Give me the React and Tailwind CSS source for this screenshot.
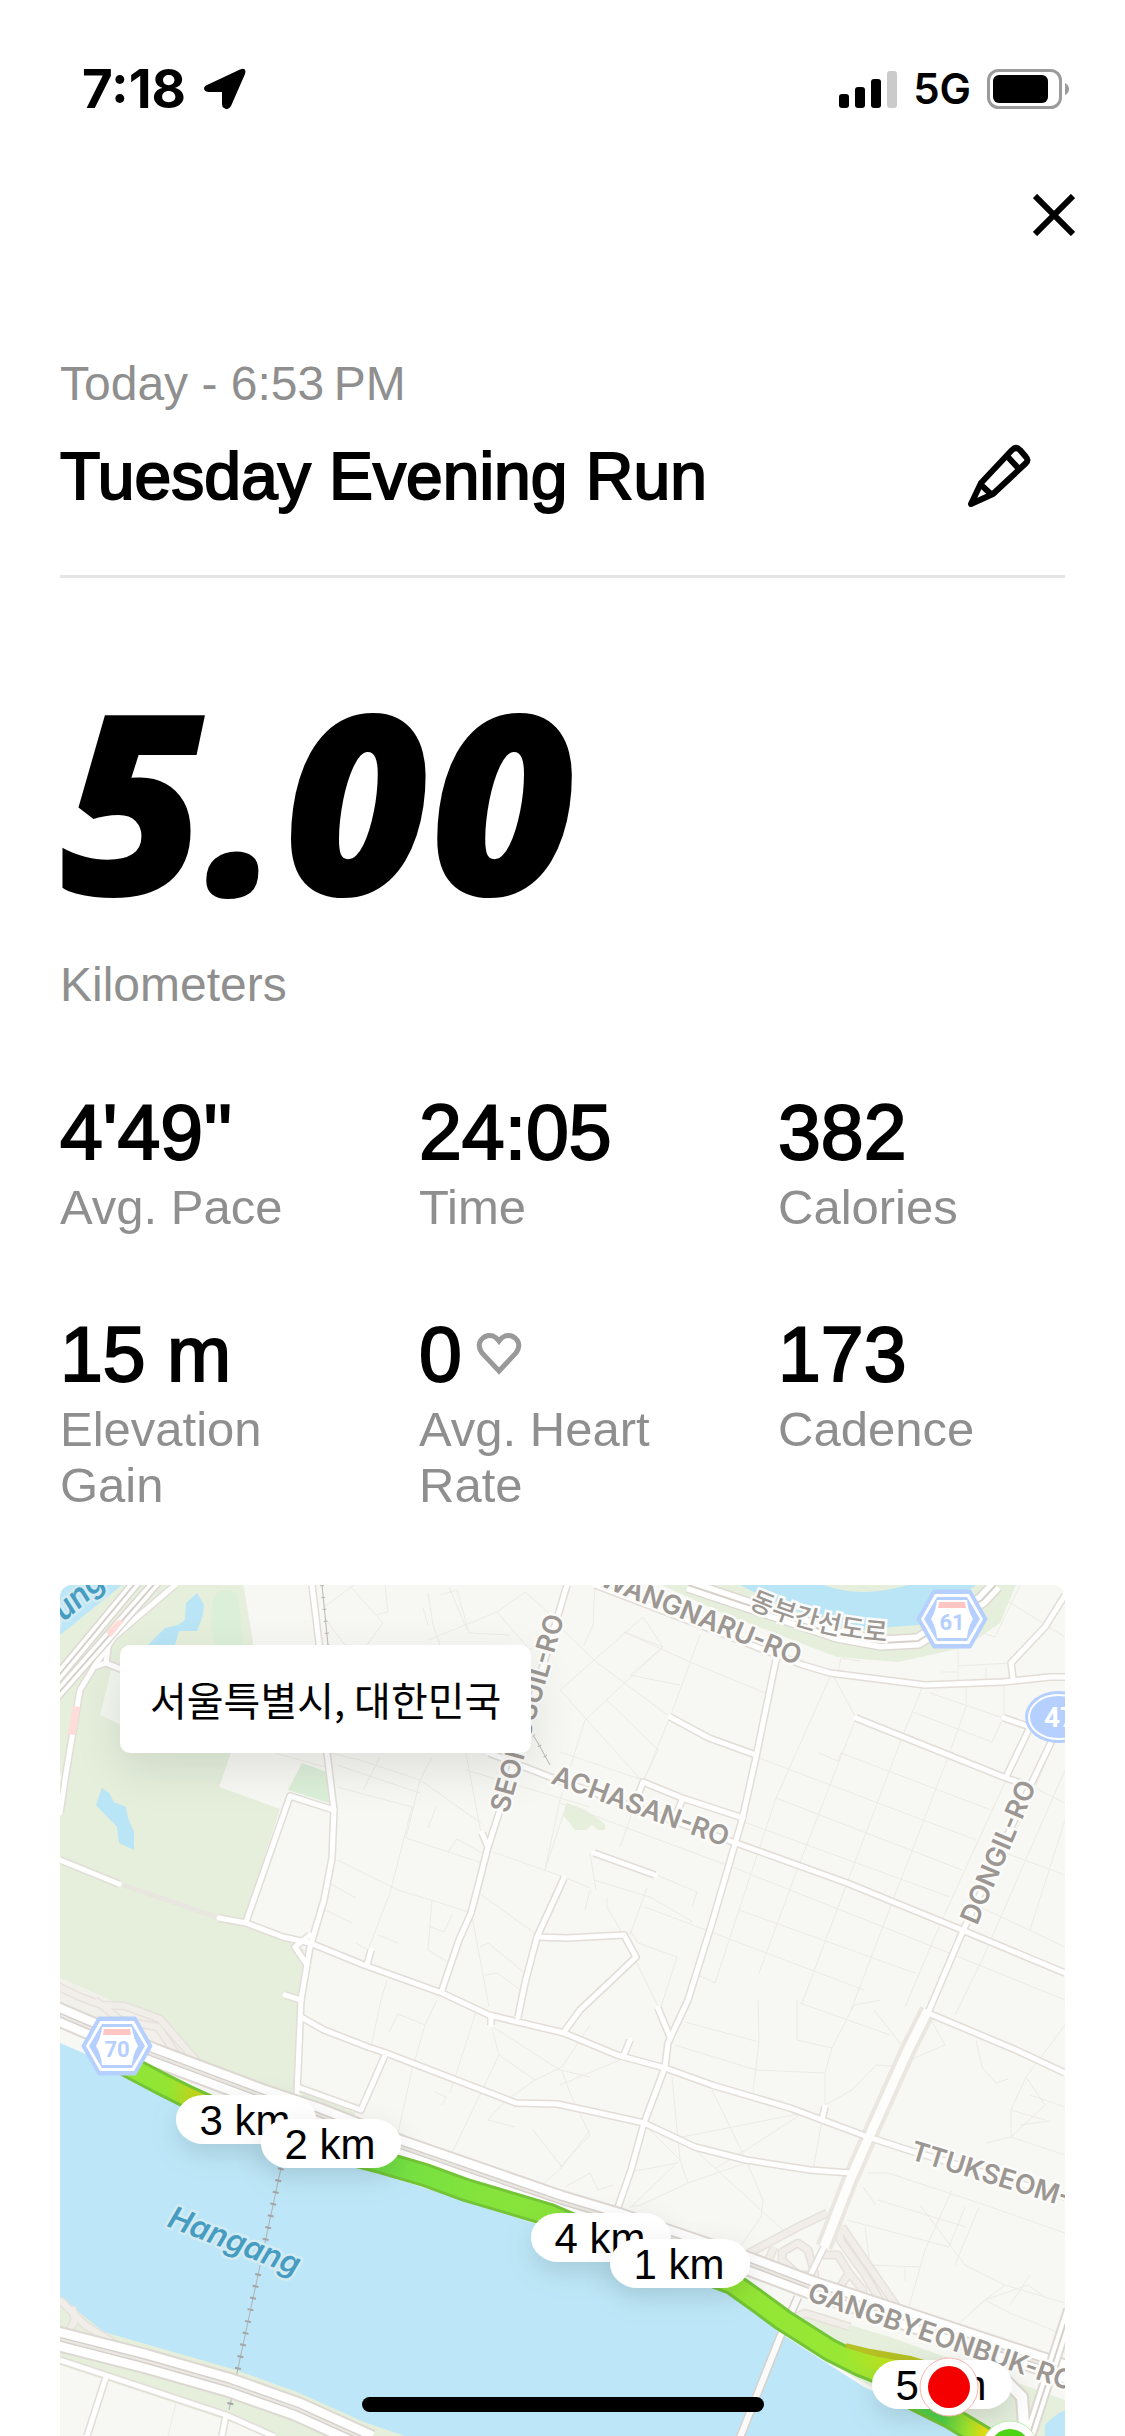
import React from 'react';

const STATS = [
  { label: 'Avg. Pace', value: "4'49''" },
  { label: 'Time', value: '24:05' },
  { label: 'Calories', value: '382' },
  { label: 'Elevation Gain', value: '15 m' },
  { label: 'Avg. Heart Rate', value: '0', heart: true },
  { label: 'Cadence', value: '173' },
];

// Small residential streets, drawn as hairlines
const STREETS = [
  'M640 50L630 78L610 132L583 197L560 262',
  'M564 47L630 77L710 110',
  'M583 32L603 62L525 135L500 215L485 285',
  'M583 32L540 70L500 105L583 197',
  'M564 47L603 62',
  'M500 42L535 76L610 132',
  'M535 0L533 40L524 60',
  'M547 115L598 165L583 197',
  'M603 62L570 90L609 98L620 100',
  'M770 92L716 213L679 325L655 398L638 390',
  'M774 92L796 133L737 285L699 388',
  'M841 155L787 298L742 418',
  'M887 175L833 315L791 425',
  'M946 195L882 335L845 422',
  'M781 168L931 225',
  'M759 168L778 176L781 168',
  'M699 173L916 255',
  'M716 213L902 285',
  'M684 237L890 312',
  'M672 282L899 372L1005 415',
  'M679 325L855 388',
  'M585 322L804 405',
  'M500 167L583 195',
  'M500 218L672 282',
  'M1005 185L922 375L895 430',
  'M1005 235L970 345',
  'M1005 130L970 215L930 300',
  'M973 202L1005 218',
  'M929 262L1005 290',
  'M916 320L1005 362',
  'M882 87L898 87M898 63V95M898 81L950 78M926 82V96',
  'M777 92L781 73L800 76',
  'M946 15L1005 52M960 0L935 52L920 47',
  'M862 103L841 155',
  'M870 108L943 133L932 157L853 127',
  'M906 100V122L887 175M944 97V133',
  'M534 295L590 312L633 337M587 303L580 322L570 350',
  'M592 288L637 307L632 322',
  'M530 268L536 305M525 325L530 305M547 312V322L562 348',
  'M562 348L600 425M570 345L578 358L617 372L600 425',
  'M291 2L316 30L328 27L325 0M316 30L323 38L296 75',
  'M264 22L294 0M264 32L296 75',
  'M368 8L373 40L380 60M389 2L407 45M363 23L368 40',
  'M368 55L405 40L437 27L465 7M380 10L397 5L409 48',
  'M437 27L470 65L505 40M465 7L505 42M409 48L450 50',
  'M183 0L193 60',
  'M277 275L338 305L409 327',
  'M352 222L330 308L308 365L296 358M318 350L338 358',
  'M277 202L352 222M303 205L320 172M277 180L360 208',
  'M270 168L300 175L360 195L421 238',
  'M406 168L421 248M215 168L265 182',
  'M372 172L360 195L346 253L422 278M376 222L368 243M388 267L397 254L422 268',
  'M433 267L504 292L530 303',
  'M419 308L477 350',
  'M412 332L429 422M425 390L437 388L463 407M420 362L428 358L465 388',
  'M507 218L485 285',
  'M372 315L368 365L389 378M368 341L384 347L392 330',
  'M267 297L296 313M265 325L292 338',
  'M406 185L530 222',
  'M327 395L321 415L311 462',
  'M377 415L365 440L352 485L338 548M365 440L338 429L329 447',
  'M416 427L390 508',
  'M431 440L439 470L392 568M433 442L500 485L530 492',
  'M439 470L475 495L502 482L530 440',
  'M475 495L444 517L428 535L455 542',
  'M375 507L386 512L382 520',
  'M473 545L502 582L480 602M502 582L530 545',
  'M625 437L699 457L693 507',
  'M615 460L696 485L765 488M698 415L699 457',
  'M737 415V455L772 463M740 418L830 450',
  'M814 425L843 462',
  'M868 430L885 460L852 474L830 481',
  'M821 415L794 420L772 463L765 488V522M830 481L816 480L792 505L765 520',
  'M612 492L620 575L571 622',
  'M652 505L686 575L703 615L701 632L680 662',
  'M743 528L622 552M500 500L560 475',
  'M762 535L753 585',
  'M686 578L628 598L581 620L569 622',
  'M635 565L723 645M575 586L617 578M656 583L686 565L743 528',
  'M628 598L620 575L590 545M500 582L530 550L510 508L502 486',
  'M505 602L530 588L538 605L553 600',
  'M808 588L828 588L919 618L1005 648',
  'M818 615L906 642M803 602L816 620',
  'M787 635L889 662L905 622',
  'M892 605L865 665L848 725',
  'M919 622L895 680M805 642L810 680L860 682M845 682V696',
  'M916 455L922 482L936 498L948 494',
  'M966 492L951 525V552L1005 570M951 525L985 535',
  'M926 558L951 552L985 520L966 492L1005 440',
  'M970 510L1005 522M960 540L990 536',
  'M895 742L925 715L950 728L1005 750M925 715L968 700L985 712M950 720L970 690',
  'M860 620L905 680L945 700L1005 718M945 700L925 715',
  'M108 851L116 817',
];

const ROADS = [
  'M252 0L259 58L267 168L274 225L272 273L264 315L250 362L241 415L237 508',
  'M274 225L230 211L186 337',
  'M0 275L59 299',
  'M159 333L186 338L223 352L250 358L304 380L382 408L429 430L504 448L557 470L605 483L652 500L730 523L808 552L848 565L1005 612',
  'M115 0L54 52L34 82L20 105L7 182L0 228',
  'M49 55L46 78L80 92M46 78L34 82',
  'M507 0L439 228L428 262L417 305L411 328L399 355L382 405M422 248L428 262',
  'M429 168L490 192L676 258L787 298L902 345L1005 388',
  'M534 268L595 290',
  'M716 75L696 172L682 235L652 338L628 415L608 458L605 482L584 538L571 585L556 628',
  'M598 423L610 452',
  'M535 0L640 40L743 80L770 88L865 100L943 97L990 92L1005 92',
  'M953 93L951 78L985 42L1005 10',
  'M610 132L649 153L696 170',
  'M579 208L583 197L622 213L683 233M622 215L617 228',
  'M796 133L946 193L973 202',
  'M944 133L970 142L946 192',
  'M1005 128L973 195L902 348L868 428',
  'M764 662L748 695',
  'M504 293L477 352L465 398L458 432',
  'M477 352L507 353L564 350L576 372L554 393L520 425L504 447',
  'M311 365L307 380M225 410L241 415M570 455L563 472M250 350L235 362L247 380',
  'M241 432L264 445L308 462L326 468L456 518L497 519L530 526L584 538L635 562L686 575L750 585L791 588',
  'M326 468L301 525L240 503',
  'M868 428L956 465L1005 488',
  'M431 430V440M765 522L762 535',
  'M0 775L166 830L213 851M46 792L27 851M166 830L162 851',
];

const PINS = [
  { label: '3 km', x: 116, y: 510 },
  { label: '2 km', x: 201, y: 534 },
  { label: '4 km', x: 471, y: 628 },
  { label: '1 km', x: 550, y: 654 },
  { label: '5 km', x: 812, y: 775 },
];

const NORTH_HIGHWAY = 'M-5 428L91 469L203 511L257 529L341 562L500 617L557 634L689 679L750 702L1010 788';
const SOUTH_HIGHWAY = 'M-5 753L85 776L169 800L237 824L310 857';
const RIVERSIDE = 'M628 0L703 25L777 50L821 58L858 56L922 15L936 0';
const DONGIL = 'M868 425L848 465L809 552L790 595L764 662';
const RAMPS = [
  'M767 628L738 642L689 668M703 688L714 662M780 640V655L805 690L830 732M782 642L848 738',
  'M722 667L738 658L748 665L755 690L738 690L722 675Z',
  'M762 670H778L789 688L780 702H755M789 688L803 705V720',
  'M-5 400L20 412L42 420L65 421L100 434L112 448L140 480M35 415L60 435L98 442L118 472',
  'M0 715L25 740L60 762M12 722L15 735L8 748',
  'M720 740L745 728L790 742',
];
const ROUTE = 'M66 480L100 498L128 512L203 546L262 562L324 578L365 590L406 605L490 630L560 660L640 686L672 698L700 718L723 735L770 765L800 780L825 790L850 812L890 832L925 853';

const StatusBar = () => (
  <div className="flex items-center justify-between pt-[49px] pl-[82px] pr-[54px]">
    <div className="flex h-20 items-center gap-[18px]">
      <span className="font-['Inter',sans-serif] text-[53px] leading-[60px] font-bold">7:18</span>
      <svg viewBox="0 0 42 42" className="h-[42px] w-[42px]" aria-hidden="true">
        <path
          d="M3 17L36 1.500Q43 -1 41 6L27 38Q24 43 20 40Q18 39 18 36V24H5Q1 24 0 21Q0 18 3 17Z"
          fill="black"
        />
      </svg>
    </div>
    <div className="flex h-20 items-center gap-4">
      <svg viewBox="0 0 58 38" className="h-[38px] w-[58px]" aria-hidden="true">
        <rect x="0" y="24" width="10" height="14" rx="3" />
        <rect x="16" y="17" width="10" height="21" rx="3" />
        <rect x="32" y="9" width="10" height="29" rx="3" />
        <rect x="48" y="1" width="10" height="37" rx="3" fill="#cbcbcb" />
      </svg>
      <span className="font-['Inter',sans-serif] text-[42px] leading-[60px] font-semibold">5G</span>
      <svg viewBox="0 0 84 40" className="h-10 w-[84px]" aria-hidden="true">
        <rect x="1.500" y="1.500" width="72" height="37" rx="10" fill="none" stroke="#9b9b9b" strokeWidth="3" />
        <rect x="6" y="6" width="55" height="28" rx="6" />
        <path d="M78 14Q82 16 82 20Q82 24 78 26Z" fill="#9b9b9b" />
      </svg>
    </div>
  </div>
);

const PencilIcon = () => (
  <svg
    viewBox="28 24 66 66"
    className="h-[66px] w-[66px]"
    fill="none"
    stroke="black"
    strokeWidth="6"
    strokeLinejoin="round"
    aria-hidden="true"
  >
    <path d="M32 85L42 64L73 31Q77 27 81 31L87 38Q90 41 87 44L54 75Z" />
    <path d="M68 37L80 50M41 65L53 76" />
  </svg>
);

const HeartIcon = () => (
  <svg viewBox="0 0 46 44" className="h-11 w-[46px]" fill="none" stroke="#999999" strokeWidth="5" aria-hidden="true">
    <path d="M23 39L6 21Q1 14 5 8Q10 2 17 4Q20 5 23 9Q26 5 29 4Q36 2 41 8Q45 14 40 21Z" />
  </svg>
);

const HexShield = ({ x, y, number }) => (
  <g transform={`translate(${x} ${y})`}>
    <path d="M-18 -28H18L34 0L18 28H-18L-34 0Z" fill="#b5d0ff" stroke="#b5d0ff" strokeWidth="3" strokeLinejoin="round" />
    <path d="M-17 -25H17L31 0L17 25H-17L-31 0Z" fill="white" />
    <path d="M-15 -22H15L28 0L15 22H-15L-28 0Z" fill="#b5d0ff" />
    <path d="M-15 -19H15Q16 -8 21 0Q16 8 15 19H-15Q-16 8 -21 0Q-16 -8 -15 -19Z" fill="white" />
    <path d="M-13 -17H13L14 -11H-14Z" fill="#ffc5c3" />
    <text y="11" textAnchor="middle" fill="#b5d0ff" className="font-['Roboto',sans-serif] text-[22px] font-bold">
      {number}
    </text>
  </g>
);

const RoadLabel = ({ x, y, angle, children }) => (
  <text
    transform={`translate(${x} ${y}) rotate(${angle})`}
    fill="#9c9793"
    stroke="#fbfbf9"
    strokeWidth="5"
    strokeLinejoin="round"
    paintOrder="stroke"
    className="font-['Inter',sans-serif] text-[27px] font-semibold"
  >
    {children}
  </text>
);

const RouteMap = () => (
  <svg viewBox="0 0 1005 851" className="block w-full" role="img" aria-label="Route map">
    <defs>
      <filter id="pinShadow" x="-30%" y="-60%" width="160%" height="260%">
        <feDropShadow dx="0" dy="10" stdDeviation="14" floodOpacity="0.12" />
      </filter>
      <linearGradient id="routeColor" gradientUnits="userSpaceOnUse" x1="66" y1="0" x2="925" y2="0">
        <stop offset="0" stopColor="#8fe637" />
        <stop offset="0.05" stopColor="#93e532" />
        <stop offset="0.08" stopColor="#c4d61a" />
        <stop offset="0.14" stopColor="#8fe637" />
        <stop offset="0.29" stopColor="#6fe045" />
        <stop offset="0.42" stopColor="#85e33b" />
        <stop offset="0.83" stopColor="#98e734" />
        <stop offset="0.87" stopColor="#a8e52c" />
        <stop offset="0.9" stopColor="#5ad84a" />
        <stop offset="0.95" stopColor="#4fcf48" />
        <stop offset="0.98" stopColor="#a3e42c" />
        <stop offset="1" stopColor="#e8dc10" />
      </linearGradient>
      <linearGradient id="paceDrop" gradientUnits="userSpaceOnUse" x1="780" y1="0" x2="840" y2="0">
        <stop offset="0" stopColor="#98e734" />
        <stop offset="1" stopColor="#c6e21a" />
      </linearGradient>
      <path id="dongbu" d="M688 22Q758 53 832 57" />
    </defs>

    <rect width="1005" height="851" fill="#f7f8f3" />

    {/* Parks */}
    <path d="M0 0H183L193 60L171 168L159 202L220 224L184 335L245 365L238 412L236 510H203L135 478L101 438L61 420L0 393Z" fill="#e5efdc" />
    <path d="M51 85L95 92L61 140L40 130Z" fill="#f4f6f0" />
    <path d="M155 10Q168 0 178 10L183 60H156Q146 35 155 10Z" fill="#dcefd8" />
    <path d="M242 178L267 187L269 218L228 205Z" fill="#dcefd8" />
    <path d="M602 0L662 28L777 72L838 77L906 62L940 38L956 0Z" fill="#e5efdc" />
    <path d="M507 218L524 224L545 239V245H538L532 240L526 245H515L503 230Z" fill="#e5efdc" />
    <path d="M242 507L296 528L290 540L240 525Z" fill="#e5efdc" />
    <path d="M0 228L7 182L0 190Z" fill="#f7f8f3" />
    <path d="M0 393L61 420L101 438L135 478L100 466L0 424Z" fill="#f2f0ea" />
    <path d="M740 725L830 752L1005 815V851H900L790 790L720 740Z" fill="#e5efdc" />
    <path d="M985 840Q1000 825 1005 826V851H985Z" fill="#bde7f8" />

    {/* Water */}
    <path d="M0 0H62L0 50Z" fill="#bde7f8" />
    <path d="M137 8L144 20L143 30L137 46H119L115 60H88L105 43L118 40L125 35L126 18Z" fill="#b9e5f6" />
    <path d="M42 203L49 208L54 217L66 222L68 233L74 247V265L59 258L57 242L36 220Z" fill="#b9e5f6" />
    <path d="M680 0L720 20L791 45L858 40L916 0Z" fill="#b9e5f6" />
    <path d="M764 0Q800 14 848 0Z" fill="#e5efdc" />
    <path d="M0 707L44 742L176 780L237 802L304 832L358 851H0Z" fill="#e5efdc" />
    <path
      d="M0 458L68 487L118 515L203 555L318 588L473 638L662 702L720 748L804 802L855 825L905 851H345L304 837L237 807L176 785L44 747L0 712Z"
      fill="#bde7f8"
    />
    <path d="M0 780L166 835L213 851H0Z" fill="#f7f8f3" />

    {/* Streets and roads */}
    <g fill="none" stroke="#edeae4">
      {STREETS.map((d) => (
        <path key={d} d={d} />
      ))}
    </g>
    <path d="M262 0L268 60L300 110M460 130L478 158L490 180" fill="none" stroke="#b9b6b3" />
    <path d="M262 0L268 60M460 130L478 158L490 180" fill="none" stroke="#b9b6b3" strokeWidth="4" strokeDasharray="1 11" />
    <path d="M63 300L159 333" stroke="#e9e5df" strokeWidth="5" />
    <g fill="none" stroke="#e6e1db" strokeWidth="9" strokeLinejoin="round">
      {RAMPS.map((d) => (
        <path key={d} d={d} />
      ))}
    </g>
    <g fill="none" stroke="#f1ede8" strokeWidth="6" strokeLinejoin="round">
      {RAMPS.map((d) => (
        <path key={d} d={d} />
      ))}
    </g>
    <path d={DONGIL} fill="none" stroke="#eae6e0" strokeWidth="17" />
    <g fill="none" stroke="#e2ddd7" strokeWidth="8" strokeLinejoin="round">
      {ROADS.map((d) => (
        <path key={d} d={d} />
      ))}
    </g>
    <g fill="none" stroke="white" strokeWidth="5" strokeLinecap="round" strokeLinejoin="round">
      {ROADS.map((d) => (
        <path key={d} d={d} />
      ))}
    </g>
    <path d={DONGIL} fill="none" stroke="#fdfdfc" strokeWidth="9" />

    {/* Bridges */}
    <path d="M738 712L720 752L679 855" fill="none" stroke="#d5d1cc" strokeWidth="9" />
    <path d="M738 712L720 752L679 855" fill="none" stroke="#fafafa" strokeWidth="6" />
    <path d="M221 583L169 825" stroke="#b0b0b0" />
    <path d="M221 583L169 825" stroke="#a5a5a5" strokeWidth="6" strokeDasharray="2 10" />

    {/* Expressways */}
    <g fill="none" strokeLinejoin="round">
      <g stroke="#ddd8d2">
        <path d={NORTH_HIGHWAY} strokeWidth="25" />
        <path d={SOUTH_HIGHWAY} strokeWidth="26" />
        <path d={RIVERSIDE} strokeWidth="16" />
        <path d="M-5 95L78 -5M-5 112L98 -5" strokeWidth="12" />
      </g>
      <g stroke="white">
        <path d={NORTH_HIGHWAY} strokeWidth="21" />
        <path d={SOUTH_HIGHWAY} strokeWidth="22" />
        <path d={RIVERSIDE} strokeWidth="13" />
        <path d="M-5 95L78 -5M-5 112L98 -5" strokeWidth="9" />
      </g>
      <g stroke="#d6d1cb">
        <path d={NORTH_HIGHWAY} strokeWidth="5" />
        <path d={SOUTH_HIGHWAY} strokeWidth="5" />
        <path d={RIVERSIDE} strokeWidth="2" />
        <path d="M-5 95L78 -5M-5 112L98 -5" strokeWidth="2" />
      </g>
      <g stroke="#ece8e3">
        <path d={NORTH_HIGHWAY} strokeWidth="2" />
        <path d={SOUTH_HIGHWAY} strokeWidth="2" />
      </g>
      <path d="M1010 725L968 855M940 790L962 812L965 855" stroke="#ddd8d2" strokeWidth="14" />
      <path d="M1010 725L968 855M940 790L962 812L965 855" stroke="white" strokeWidth="10" />
      <path d="M1010 725L968 855" stroke="#d6d1cb" strokeWidth="2" />
    </g>
    <path d="M46 47L58 35L64 36L51 52ZM13 121L20 122L15 150L8 149Z" fill="#ffdcd7" />

    {/* Recorded route */}
    <g fill="none" strokeLinejoin="round">
      <path d={ROUTE} stroke="#73c436" strokeWidth="24" />
      <path d="M785 764L810 770L850 777L880 786" stroke="#b5c022" strokeWidth="12" />
      <path d={ROUTE} stroke="url(#routeColor)" strokeWidth="18" />
      <path d="M780 768L815 778L860 786" stroke="url(#paceDrop)" strokeWidth="13" />
    </g>

    <RoadLabel x={448} y={229} angle={-74}>SEONGSUIL-RO</RoadLabel>
    <RoadLabel x={490} y={198} angle={20}>ACHASAN-RO</RoadLabel>
    <RoadLabel x={538} y={0} angle={22}>WANGNARU-RO</RoadLabel>
    <RoadLabel x={917} y={341} angle={-67}>DONGIL-RO</RoadLabel>
    <RoadLabel x={849} y={574} angle={17}>TTUKSEOM-RO</RoadLabel>
    <RoadLabel x={746} y={715} angle={19}>GANGBYEONBUK-RO</RoadLabel>
    <text
      fill="#9c9793"
      stroke="#fbfbf9"
      strokeWidth="5"
      paintOrder="stroke"
      className="font-['Noto_Sans_CJK_KR',sans-serif] text-[26px] font-medium"
    >
      <textPath href="#dongbu">동부간선도로</textPath>
    </text>
    <g
      fill="#479cc1"
      stroke="#d3ebf3"
      strokeWidth="5"
      strokeLinejoin="round"
      paintOrder="stroke"
      className="font-['Inter',sans-serif] text-[31px] font-semibold italic"
    >
      <text transform="translate(106 641) rotate(21)">Hangang</text>
      <text transform="translate(-10 50) rotate(-42)">oung</text>
    </g>

    <HexShield x={57} y={461} number="70" />
    <HexShield x={892} y={34} number="61" />
    <ellipse cx="998" cy="132" rx="33" ry="26" fill="#b5d0ff" />
    <ellipse cx="998" cy="132" rx="29" ry="22" fill="none" stroke="white" strokeWidth="2" />
    <text x="984" y="142" fill="white" className="font-['Roboto',sans-serif] text-[28px] font-bold">47</text>

    {/* Kilometer markers */}
    {PINS.map((pin) => (
      <g key={pin.label} transform={`translate(${pin.x} ${pin.y})`}>
        <rect width="140" height="49" rx="28" fill="white" filter="url(#pinShadow)" />
        <text x="69" y="40" textAnchor="middle" className="font-['Liberation_Sans',sans-serif] text-[42px]">
          {pin.label}
        </text>
      </g>
    ))}
    <circle cx="889" cy="802" r="29" fill="white" stroke="#f5b5b5" />
    <circle cx="889" cy="802" r="21" fill="#f40000" />
    <circle cx="950" cy="864" r="28" fill="white" stroke="#b9ecaa" />
    <circle cx="950" cy="864" r="20" fill="#4cd314" />
  </svg>
);

const App = () => {
  return (
    <div className="relative min-h-screen bg-white font-['Liberation_Sans',Arial,sans-serif] text-black">
      <StatusBar />

      <div className="flex h-[172px] items-center justify-end pr-[29px]">
        <button type="button" aria-label="Close" className="flex h-[84px] w-[84px] items-center justify-center">
          <svg viewBox="0 0 42 42" className="h-[42px] w-[42px]" stroke="black" strokeWidth="6" aria-hidden="true">
            <path d="M2 2L40 40M40 2L2 40" />
          </svg>
        </button>
      </div>

      <main className="px-[60px] pt-[55px]">
        {/* Header */}
        <header className="border-b-[3px] border-[#e5e5e5] pb-[59px]">
          <p className="text-[48px] leading-[56px] text-[#8f8f8f]">Today - 6:53{'\u202f'}PM</p>
          <div className="mt-6 flex items-center justify-between pr-8">
            <h1 className="text-[66px] leading-[80px] [-webkit-text-stroke:2px_black]">Tuesday Evening Run</h1>
            <button type="button" aria-label="Edit name">
              <PencilIcon />
            </button>
          </div>
        </header>

        {/* Distance */}
        <section className="mt-[95px]">
          <p className="font-['Open_Sans',sans-serif] text-[252px] leading-[252px] font-extrabold italic">5.00</p>
          <p className="mt-8 text-[48px] leading-[56px] text-[#8f8f8f]">Kilometers</p>
        </section>

        {/* Stats */}
        <dl className="mt-20 grid grid-cols-3 gap-x-[72px] gap-y-20">
          {STATS.map((stat) => (
            <div key={stat.label} className="flex flex-col-reverse justify-end gap-2">
              <dt className="text-[49px] leading-[56px] text-[#8f8f8f]">{stat.label}</dt>
              <dd className="flex items-center gap-[14px] text-[77px] leading-[78px] [-webkit-text-stroke:2px_black]">
                {stat.value}
                {stat.heart && <HeartIcon />}
              </dd>
            </div>
          ))}
        </dl>

        {/* Map */}
        <section className="relative mt-[72px] overflow-hidden rounded-t-xl">
          <RouteMap />
          <p className="absolute top-[60px] left-[60px] rounded-[10px] bg-white px-[30px] py-6 font-['Noto_Sans_CJK_KR',sans-serif] text-[40px] leading-[60px] shadow-[0_16px_48px_rgba(0,0,0,0.1)]">
            서울특별시, 대한민국
          </p>
        </section>
      </main>

      {/* Home indicator */}
      <div className="fixed bottom-6 left-1/2 h-[15px] w-[402px] -translate-x-1/2 rounded-full bg-black" />
    </div>
  );
};

export default App;
